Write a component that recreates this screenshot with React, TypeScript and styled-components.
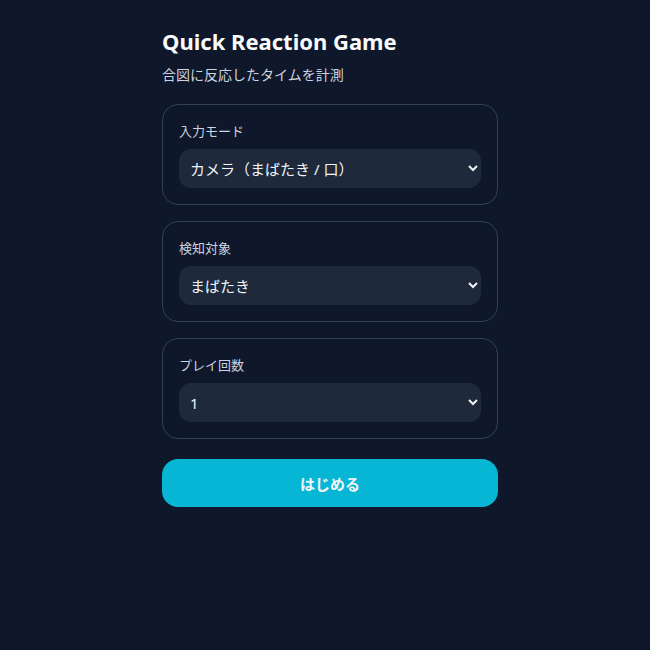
import React from "react";
import styled, { createGlobalStyle } from "styled-components";

const Global = createGlobalStyle`
  html, body { margin: 0; padding: 0; background: #0f172a; }
  body { font-family: "Noto Sans", "Noto Sans CJK JP", sans-serif; color: #f1f5f9; color-scheme: dark; }
`;

const Page = styled.main`
  min-height: 650px;
  display: flex;
  justify-content: center;
  padding: 25px 0 0 10px;
  box-sizing: border-box;
`;

const Column = styled.div`
  width: 336px;
  display: flex;
  flex-direction: column;
`;

const Title = styled.h1`
  margin: 0;
  font-size: 22px;
  font-weight: 700;
  line-height: 32px;
  color: #f8fafc;
`;

const Subtitle = styled.p`
  margin: 7px 0 18px;
  font-size: 14px;
  line-height: 22px;
  color: #cbd5e1;
`;

const Cards = styled.div`
  display: flex;
  flex-direction: column;
  gap: 16px;
`;

const Card = styled.section`
  border: 1px solid #334155;
  border-radius: 16px;
  padding: 16px;
  display: flex;
  flex-direction: column;
  gap: 8px;
`;

const Label = styled.label`
  font-size: 13px;
  line-height: 20px;
  color: #cbd5e1;
`;

const Select = styled.select`
  height: 39px;
  border: none;
  border-radius: 12px;
  background: #1e293b;
  color: #f1f5f9;
  font-family: inherit;
  font-size: 15px;
  padding: 0 7px;
  outline: none;
`;

const StartButton = styled.button`
  margin-top: 20px;
  height: 48px;
  border: none;
  border-radius: 16px;
  background: #06b6d4;
  color: #f1f5f9;
  font-family: inherit;
  font-size: 15px;
  font-weight: 700;
  cursor: pointer;
`;

const fields = [
  { label: "入力モード", options: ["カメラ（まばたき / 口）", "キーボード"] },
  { label: "検知対象", options: ["まばたき", "口"] },
  { label: "プレイ回数", options: ["1", "3", "5"] },
];

export default function App() {
  return (
    <>
      <Global />
      <Page>
        <Column>
          <Title>Quick Reaction Game</Title>
          <Subtitle>合図に反応したタイムを計測</Subtitle>
          <Cards>
            {fields.map((f) => (
              <Card key={f.label}>
                <Label>{f.label}</Label>
                <Select defaultValue={f.options[0]}>
                  {f.options.map((o) => (
                    <option key={o}>{o}</option>
                  ))}
                </Select>
              </Card>
            ))}
          </Cards>
          <StartButton>はじめる</StartButton>
        </Column>
      </Page>
    </>
  );
}
